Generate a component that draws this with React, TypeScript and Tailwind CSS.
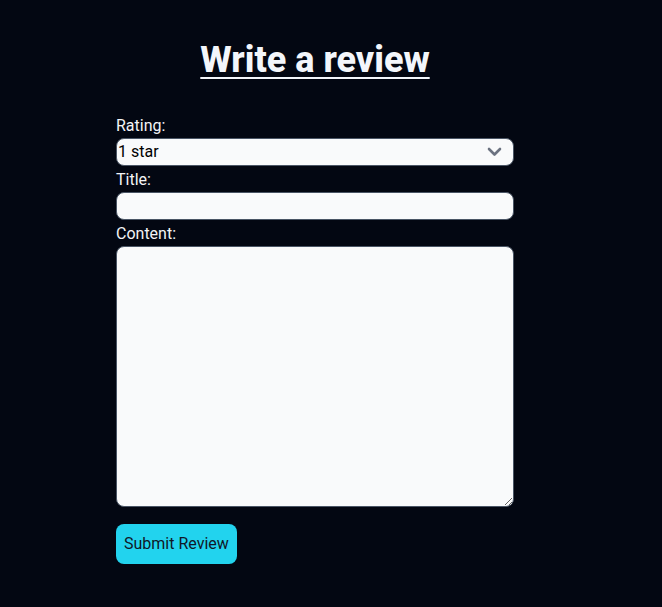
import { useState } from 'react';

export default function App() {
  const [rating, setRating] = useState('1');
  const [title, setTitle] = useState('');
  const [content, setContent] = useState('');

  return (
    <div className="min-h-screen w-full bg-[#030712] text-gray-100 font-['Roboto',sans-serif]">
      <div className="ml-[116px] w-[398px] pt-[40px]">
        <h1 className="text-center text-4xl font-extrabold underline decoration-2 underline-offset-[5px] text-[#f3f6fb]">
          Write a review
        </h1>
        <form className="mt-[34px] flex flex-col" onSubmit={(e) => e.preventDefault()}>
          <label className="text-base leading-6 text-gray-100" htmlFor="rating">Rating:</label>
          <div className="relative">
            <select
              id="rating"
              value={rating}
              onChange={(e) => setRating(e.target.value)}
              className="block h-[28px] w-full appearance-none rounded-lg border border-gray-600 bg-gray-50 pl-[1px] text-base text-black outline-none"
            >
              <option value="1">1 star</option>
              <option value="2">2 stars</option>
              <option value="3">3 stars</option>
              <option value="4">4 stars</option>
              <option value="5">5 stars</option>
            </select>
            <svg className="pointer-events-none absolute right-[12px] top-[9px]" width="15" height="10" viewBox="0 0 15 10" fill="none">
              <path d="M2 2l5.5 5.5L13 2" stroke="#6b7280" strokeWidth="2.6" strokeLinecap="round" strokeLinejoin="round" />
            </svg>
          </div>
          <label className="mt-[2px] text-base leading-6 text-gray-100" htmlFor="title">Title:</label>
          <input
            id="title"
            value={title}
            onChange={(e) => setTitle(e.target.value)}
            className="block h-[28px] w-full rounded-lg border border-gray-600 bg-gray-50 px-1 text-base text-black outline-none"
          />
          <label className="mt-[2px] text-base leading-6 text-gray-100" htmlFor="content">Content:</label>
          <textarea
            id="content"
            value={content}
            onChange={(e) => setContent(e.target.value)}
            className="block h-[261px] w-full rounded-lg border border-gray-600 bg-gray-50 p-1 text-base text-black outline-none"
          />
          <div className="mt-[17px]">
            <button type="submit" className="h-[40px] rounded-lg bg-[#22d3ee] px-2 text-base text-gray-900">
              Submit Review
            </button>
          </div>
        </form>
      </div>
    </div>
  );
}
